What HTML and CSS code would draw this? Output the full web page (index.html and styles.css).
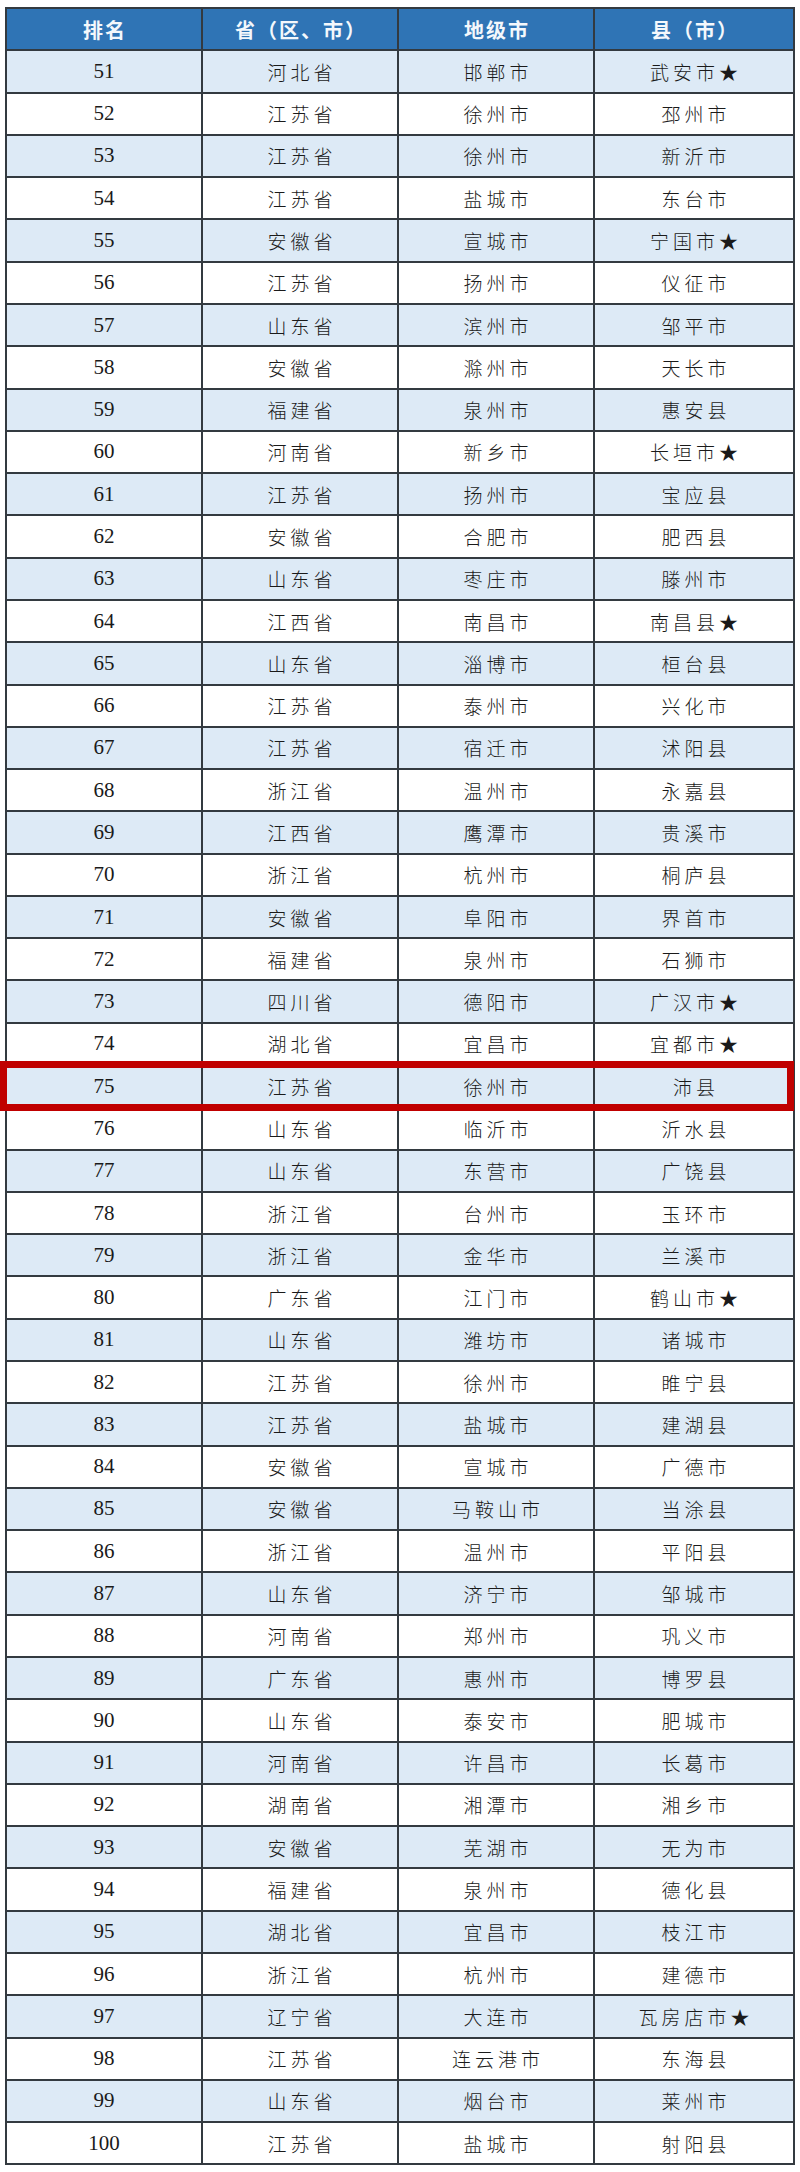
FILE: index.html
```html
<!DOCTYPE html>
<html lang="zh-CN">
<head>
<meta charset="utf-8">
<title>县域排名 51-100</title>
<link rel="stylesheet" href="styles.css">
</head>
<body>
<div class="wrap">
<table class="rank">
<colgroup><col class="c1"><col class="c2"><col class="c3"><col class="c4"></colgroup>
<thead>
<tr><th>排名</th><th>省（区、市）</th><th>地级市</th><th>县（市）</th></tr>
</thead>
<tbody>
<tr><td class="n">51</td><td>河北省</td><td>邯郸市</td><td>武安市★</td></tr>
<tr><td class="n">52</td><td>江苏省</td><td>徐州市</td><td>邳州市</td></tr>
<tr><td class="n">53</td><td>江苏省</td><td>徐州市</td><td>新沂市</td></tr>
<tr><td class="n">54</td><td>江苏省</td><td>盐城市</td><td>东台市</td></tr>
<tr><td class="n">55</td><td>安徽省</td><td>宣城市</td><td>宁国市★</td></tr>
<tr><td class="n">56</td><td>江苏省</td><td>扬州市</td><td>仪征市</td></tr>
<tr><td class="n">57</td><td>山东省</td><td>滨州市</td><td>邹平市</td></tr>
<tr><td class="n">58</td><td>安徽省</td><td>滁州市</td><td>天长市</td></tr>
<tr><td class="n">59</td><td>福建省</td><td>泉州市</td><td>惠安县</td></tr>
<tr><td class="n">60</td><td>河南省</td><td>新乡市</td><td>长垣市★</td></tr>
<tr><td class="n">61</td><td>江苏省</td><td>扬州市</td><td>宝应县</td></tr>
<tr><td class="n">62</td><td>安徽省</td><td>合肥市</td><td>肥西县</td></tr>
<tr><td class="n">63</td><td>山东省</td><td>枣庄市</td><td>滕州市</td></tr>
<tr><td class="n">64</td><td>江西省</td><td>南昌市</td><td>南昌县★</td></tr>
<tr><td class="n">65</td><td>山东省</td><td>淄博市</td><td>桓台县</td></tr>
<tr><td class="n">66</td><td>江苏省</td><td>泰州市</td><td>兴化市</td></tr>
<tr><td class="n">67</td><td>江苏省</td><td>宿迁市</td><td>沭阳县</td></tr>
<tr><td class="n">68</td><td>浙江省</td><td>温州市</td><td>永嘉县</td></tr>
<tr><td class="n">69</td><td>江西省</td><td>鹰潭市</td><td>贵溪市</td></tr>
<tr><td class="n">70</td><td>浙江省</td><td>杭州市</td><td>桐庐县</td></tr>
<tr><td class="n">71</td><td>安徽省</td><td>阜阳市</td><td>界首市</td></tr>
<tr><td class="n">72</td><td>福建省</td><td>泉州市</td><td>石狮市</td></tr>
<tr><td class="n">73</td><td>四川省</td><td>德阳市</td><td>广汉市★</td></tr>
<tr><td class="n">74</td><td>湖北省</td><td>宜昌市</td><td>宜都市★</td></tr>
<tr><td class="n">75</td><td>江苏省</td><td>徐州市</td><td>沛县</td></tr>
<tr><td class="n">76</td><td>山东省</td><td>临沂市</td><td>沂水县</td></tr>
<tr><td class="n">77</td><td>山东省</td><td>东营市</td><td>广饶县</td></tr>
<tr><td class="n">78</td><td>浙江省</td><td>台州市</td><td>玉环市</td></tr>
<tr><td class="n">79</td><td>浙江省</td><td>金华市</td><td>兰溪市</td></tr>
<tr><td class="n">80</td><td>广东省</td><td>江门市</td><td>鹤山市★</td></tr>
<tr><td class="n">81</td><td>山东省</td><td>潍坊市</td><td>诸城市</td></tr>
<tr><td class="n">82</td><td>江苏省</td><td>徐州市</td><td>睢宁县</td></tr>
<tr><td class="n">83</td><td>江苏省</td><td>盐城市</td><td>建湖县</td></tr>
<tr><td class="n">84</td><td>安徽省</td><td>宣城市</td><td>广德市</td></tr>
<tr><td class="n">85</td><td>安徽省</td><td>马鞍山市</td><td>当涂县</td></tr>
<tr><td class="n">86</td><td>浙江省</td><td>温州市</td><td>平阳县</td></tr>
<tr><td class="n">87</td><td>山东省</td><td>济宁市</td><td>邹城市</td></tr>
<tr><td class="n">88</td><td>河南省</td><td>郑州市</td><td>巩义市</td></tr>
<tr><td class="n">89</td><td>广东省</td><td>惠州市</td><td>博罗县</td></tr>
<tr><td class="n">90</td><td>山东省</td><td>泰安市</td><td>肥城市</td></tr>
<tr><td class="n">91</td><td>河南省</td><td>许昌市</td><td>长葛市</td></tr>
<tr><td class="n">92</td><td>湖南省</td><td>湘潭市</td><td>湘乡市</td></tr>
<tr><td class="n">93</td><td>安徽省</td><td>芜湖市</td><td>无为市</td></tr>
<tr><td class="n">94</td><td>福建省</td><td>泉州市</td><td>德化县</td></tr>
<tr><td class="n">95</td><td>湖北省</td><td>宜昌市</td><td>枝江市</td></tr>
<tr><td class="n">96</td><td>浙江省</td><td>杭州市</td><td>建德市</td></tr>
<tr><td class="n">97</td><td>辽宁省</td><td>大连市</td><td>瓦房店市★</td></tr>
<tr><td class="n">98</td><td>江苏省</td><td>连云港市</td><td>东海县</td></tr>
<tr><td class="n">99</td><td>山东省</td><td>烟台市</td><td>莱州市</td></tr>
<tr><td class="n">100</td><td>江苏省</td><td>盐城市</td><td>射阳县</td></tr>
</tbody>
</table>
<div class="highlight"></div>
</div>
</body>
</html>
```
FILE: styles.css
```css
html, body {
  margin: 0;
  padding: 0;
  background: #ffffff;
}
body {
  padding: 7px 0 0 5px;
  font-family: "Liberation Serif", "Noto Sans CJK SC", serif;
  color: #1a1a1a;
}
.wrap {
  position: relative;
  width: 790px;
}
.rank {
  border-collapse: collapse;
  table-layout: fixed;
  width: 790px;
}
.c1 { width: 196px; }
.c2 { width: 196px; }
.c3 { width: 196px; }
.c4 { width: 200px; }
.rank th,
.rank td {
  border: 2px solid #333a40;
  height: 42.29px;
  padding: 0;
  box-sizing: border-box;
  text-align: center;
  vertical-align: middle;
}
.rank th {
  background: #2f74b5;
  color: #f4f8fc;
  font-family: "Noto Sans CJK SC", sans-serif;
  font-weight: 700;
  font-size: 20px;
  letter-spacing: 2px;
  padding-left: 2px;
}
.rank td {
  font-family: "Liberation Serif", "Noto Sans CJK SC", serif;
  font-weight: 300;
  font-size: 19px;
  letter-spacing: 4px;
  padding-left: 4px;
}
.rank td.n {
  font-size: 21px;
  letter-spacing: 0;
  padding-left: 0;
}
.rank tbody tr:nth-child(odd) td {
  background: #ddeaf6;
}
.highlight {
  position: absolute;
  left: -5px;
  top: 1054px;
  width: 794px;
  height: 50px;
  box-sizing: border-box;
  border: 7px solid #c00000;
  pointer-events: none;
}
```
